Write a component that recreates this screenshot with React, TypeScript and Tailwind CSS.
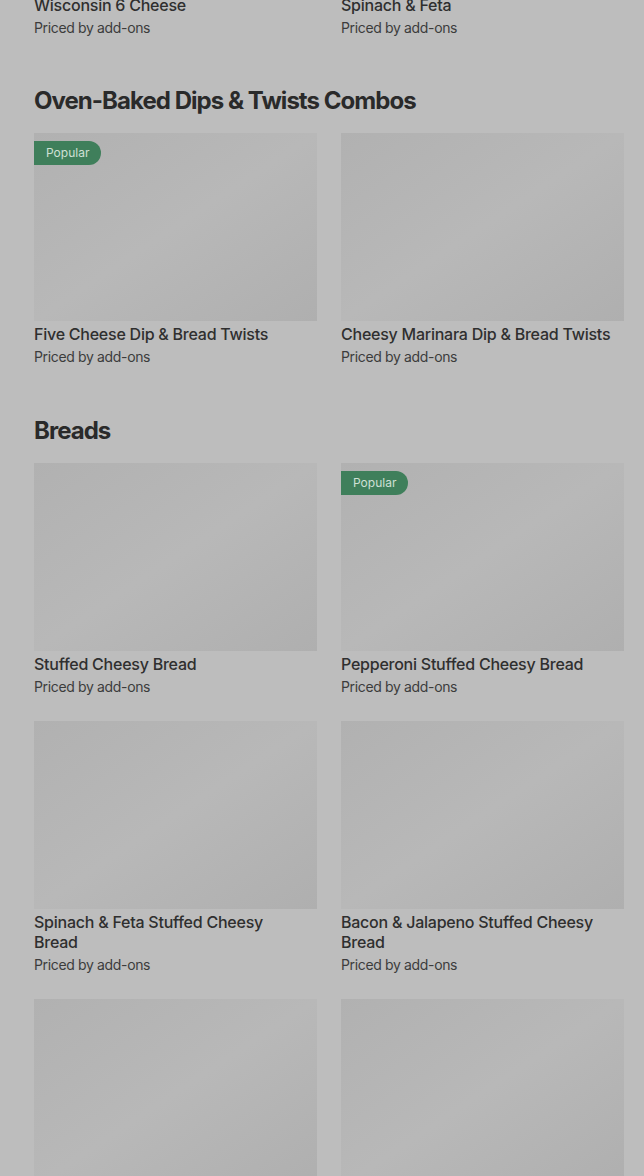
import React from "react";

type Item = { name: string; popular?: boolean };

const sections: { title: string; items: Item[] }[] = [
  {
    title: "Oven-Baked Dips & Twists Combos",
    items: [
      { name: "Five Cheese Dip & Bread Twists", popular: true },
      { name: "Cheesy Marinara Dip & Bread Twists" },
    ],
  },
  {
    title: "Breads",
    items: [
      { name: "Stuffed Cheesy Bread" },
      { name: "Pepperoni Stuffed Cheesy Bread", popular: true },
      { name: "Spinach & Feta Stuffed Cheesy Bread" },
      { name: "Bacon & Jalapeno Stuffed Cheesy Bread" },
      { name: "Parmesan Bread Twists" },
      { name: "Garlic Bread Twists" },
    ],
  },
];

function ItemText({ name }: { name: string }) {
  return (
    <div className="pr-2">
      <div className="text-[16px] leading-5 font-medium tracking-[-0.015em] text-[#2f2f2f]">{name}</div>
      <div className="mt-[3px] text-[14px] leading-5 tracking-[-0.025em] text-[#3c3c3c]">Priced by add-ons</div>
    </div>
  );
}

function Card({ item }: { item: Item }) {
  return (
    <div>
      <div className="relative h-[188px] bg-gradient-to-br from-[#b1b1b1] via-[#b8b8b8] to-[#afafaf]">
        {item.popular && (
          <span className="absolute left-0 top-2 h-6 px-3 flex items-center rounded-r-full bg-[#3f7f5b] text-[12px] text-[#cfe0d5]">
            Popular
          </span>
        )}
      </div>
      <div className="mt-[3px]">
        <ItemText name={item.name} />
      </div>
    </div>
  );
}

export default function App() {
  return (
    <div
      className="h-[1176px] overflow-hidden bg-[#bdbdbd] pl-[34px] pr-[20px]"
      style={{ fontFamily: "Inter, 'Noto Sans', sans-serif" }}
    >
      <div className="-mt-[5px] grid grid-cols-2 gap-x-6">
        <ItemText name="Wisconsin 6 Cheese" />
        <ItemText name="Spinach & Feta" />
      </div>

      {sections.map((s) => (
        <section key={s.title} className="mt-[47px] pb-px">
          <h2 className="text-[24px] leading-8 font-bold tracking-[-0.04em] text-[#2a2a2a] mb-4">
            {s.title}
          </h2>
          <div className="grid grid-cols-2 gap-x-6 gap-y-6">
            {s.items.map((it) => (
              <Card key={it.name} item={it} />
            ))}
          </div>
        </section>
      ))}
    </div>
  );
}
